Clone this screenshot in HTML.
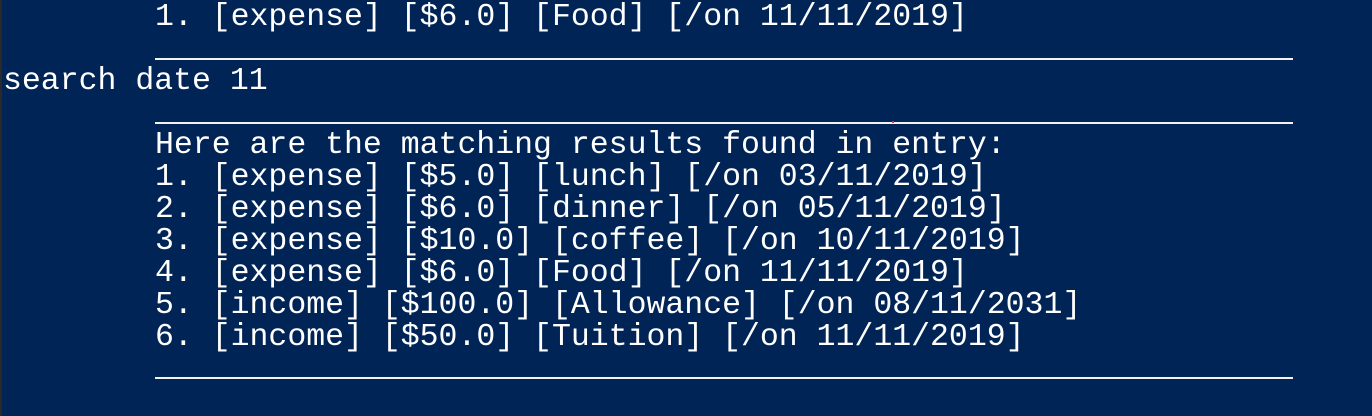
<!DOCTYPE html>
<html><head><style>
html,body{margin:0;padding:0}
body{width:1372px;height:416px;background:#012456;position:relative;overflow:hidden;font-family:"Liberation Mono",monospace;color:#fff;font-size:31.5px}
.l{position:absolute;left:155px;line-height:32px;white-space:pre}
.r{position:absolute;left:155px;width:1138px;height:2px;background:#f2f2f2}
.edge{position:absolute;left:0;top:0;width:2px;height:416px;background:#2a2a2a}
</style></head><body>
<div class="edge"></div>
<div class="l" style="top:2px">1. [expense] [$6.0] [Food] [/on 11/11/2019]</div>
<div class="r" style="top:58px"></div>
<div class="l" style="top:66px;left:3px">search date 11</div>
<div class="r" style="top:122px"></div>
<div style="position:absolute;left:892px;top:121px;width:2px;height:2px;background:#e03030"></div>
<div class="l" style="top:130px">Here are the matching results found in entry:</div>
<div class="l" style="top:162px">1. [expense] [$5.0] [lunch] [/on 03/11/2019]</div>
<div class="l" style="top:194px">2. [expense] [$6.0] [dinner] [/on 05/11/2019]</div>
<div class="l" style="top:226px">3. [expense] [$10.0] [coffee] [/on 10/11/2019]</div>
<div class="l" style="top:258px">4. [expense] [$6.0] [Food] [/on 11/11/2019]</div>
<div class="l" style="top:290px">5. [income] [$100.0] [Allowance] [/on 08/11/2031]</div>
<div class="l" style="top:322px">6. [income] [$50.0] [Tuition] [/on 11/11/2019]</div>
<div class="r" style="top:377px"></div>
</body></html>
